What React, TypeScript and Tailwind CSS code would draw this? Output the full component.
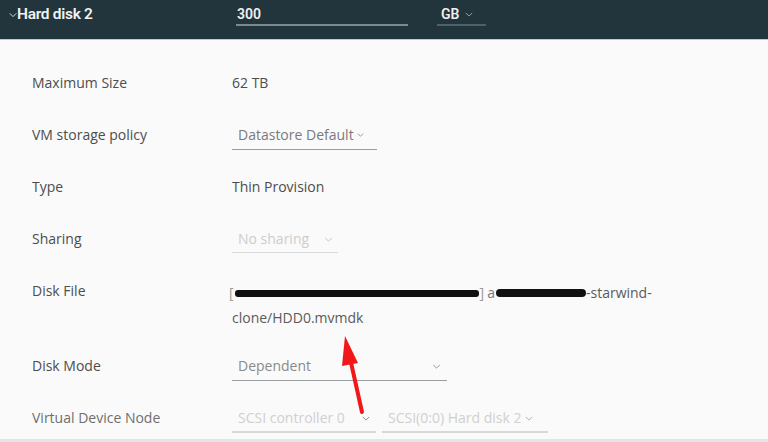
import React from "react";

const Chevron = ({ className = "" }: { className?: string }) => (
  <svg viewBox="0 0 10 6" className={className} fill="none" stroke="currentColor" strokeWidth="1.2">
    <path d="M1 1 L5 5 L9 1" />
  </svg>
);

const Label = ({ children, muted = false }: { children: React.ReactNode; muted?: boolean }) => (
  <div className={`w-[232px] shrink-0 pl-[32px] leading-[20px] ${muted ? "text-[#6f6f6f]" : "text-[#4d4d4d]"}`}>{children}</div>
);

export default function App() {
  return (
    <div className="w-[768px] h-[442px] overflow-hidden bg-[#fafafa] text-[14px]" style={{ fontFamily: '"Open Sans", "Liberation Sans", sans-serif' }}>
      {/* header */}
      <div className="h-[40px] bg-[#22343c] border-b border-[#c3cacd] flex items-start relative">
        <div className="flex items-center h-[30px] pl-[9px] w-[236px] text-[#f0f2f3] font-semibold tracking-[-0.3px]" style={{ fontFamily: 'Roboto, "Liberation Sans", sans-serif' }}>
          <Chevron className="w-[8px] h-[6px] mr-[0px] text-[#e0e4e6]" />
          <span className="text-[15.5px]">Hard disk 2</span>
        </div>
        <div className="w-[172px] h-[26px] border-b-2 border-[#7c8a90] flex items-center pl-[1px] text-[#eef0f1] text-[14px] font-semibold" style={{ fontFamily: 'Roboto, "Liberation Sans", sans-serif' }}>
          <span className="mt-[4px]">300</span>
        </div>
        <div className="ml-[29px] w-[49px] h-[26px] border-b-2 border-[#4f626a] flex items-center pl-[4px] text-[#eef0f1] text-[14px] font-semibold" style={{ fontFamily: 'Roboto, "Liberation Sans", sans-serif' }}>
          <span className="mt-[4px]">GB</span>
          <Chevron className="ml-[6px] mt-[4px] w-[8px] h-[5px] text-[#9aa6ab]" />
        </div>
      </div>

      {/* body */}
      <div className="pt-[33px] relative">
        <div className="flex h-[52px]">
          <Label>Maximum Size</Label>
          <div className="leading-[20px] text-[#4d4d4d]">62 TB</div>
        </div>
        <div className="flex h-[52px]">
          <Label>VM storage policy</Label>
          <div className="w-[145px] h-[25px] border-b border-[#9a9ea1] flex items-start pl-[6px] text-[#7a7a7a] leading-[20px]">
            <span>Datastore Default</span>
            <Chevron className="ml-[3px] mt-[8px] w-[7px] h-[4px] text-[#888]" />
          </div>
        </div>
        <div className="flex h-[52px]">
          <Label>Type</Label>
          <div className="leading-[20px] text-[#4d4d4d]">Thin Provision</div>
        </div>
        <div className="flex h-[52px]">
          <Label>Sharing</Label>
          <div className="w-[106px] h-[24px] border-b border-[#d6d8da] flex items-start pl-[6px] text-[#cdcdcd] leading-[20px]">
            <span>No sharing</span>
            <Chevron className="ml-[15px] mt-[8px] w-[9px] h-[5px] text-[#c4c4c4]" />
          </div>
        </div>
        <div className="flex h-[75px]">
          <Label>Disk File</Label>
          <div className="-mt-[1px] w-[440px] leading-[25px] text-[#5a5a5a] -ml-[3px]">
            <div className="flex items-center">
              <span className="text-[#9a9a9a]">[</span>
              <span className="inline-block w-[244px] h-[7px] bg-[#111] rounded-[3px] mx-[1px] mt-[1px]" />
              <span className="text-[#9a9a9a]">]</span>
              <span className="ml-[3px] text-[#7a7a7a]">a</span>
              <span className="inline-block w-[90px] h-[8px] bg-[#111] rounded-[4px] ml-[1px] mt-[1px]" />
              <span>-starwind-</span>
            </div>
            <div className="pl-[3px]">clone/HDD0.mvmdk</div>
          </div>
        </div>
        <div className="flex h-[52px]">
          <Label>Disk Mode</Label>
          <div className="w-[215px] h-[25px] border-b border-[#9a9ea1] flex items-start pl-[6px] text-[#8a8a8a] leading-[20px]">
            <span>Dependent</span>
            <Chevron className="ml-auto mr-[6px] mt-[8px] w-[9px] h-[5px] text-[#9a9a9a]" />
          </div>
        </div>
        <div className="flex h-[31px]">
          <Label muted>Virtual Device Node</Label>
          <div className="flex gap-[6px]">
            <div className="w-[144px] h-[25px] border-b-2 border-[#d6d8da] flex items-start pl-[6px] text-[#d0d0d0] leading-[20px]">
              <span>SCSI controller 0</span>
              <Chevron className="ml-auto mr-[6px] mt-[8px] w-[8px] h-[5px] text-[#8a8a8a]" />
            </div>
            <div className="w-[166px] h-[25px] border-b-2 border-[#d6d8da] flex items-start pl-[6px] text-[#d0d0d0] leading-[20px]">
              <span>SCSI(0:0) Hard disk 2</span>
              <Chevron className="ml-[4px] mt-[8px] w-[8px] h-[5px] text-[#b0b0b0]" />
            </div>
          </div>
        </div>
      </div>
      <div className="h-[3px] bg-[#e3e5e6]" />

      {/* red arrow annotation */}
      <svg className="absolute left-0 top-0 pointer-events-none" width="768" height="442">
        <line x1="362" y1="412" x2="350" y2="358" stroke="#f01818" strokeWidth="4" strokeLinecap="round" />
        <polygon points="345,336 358,363 342,366" fill="#f01818" />
      </svg>
    </div>
  );
}
